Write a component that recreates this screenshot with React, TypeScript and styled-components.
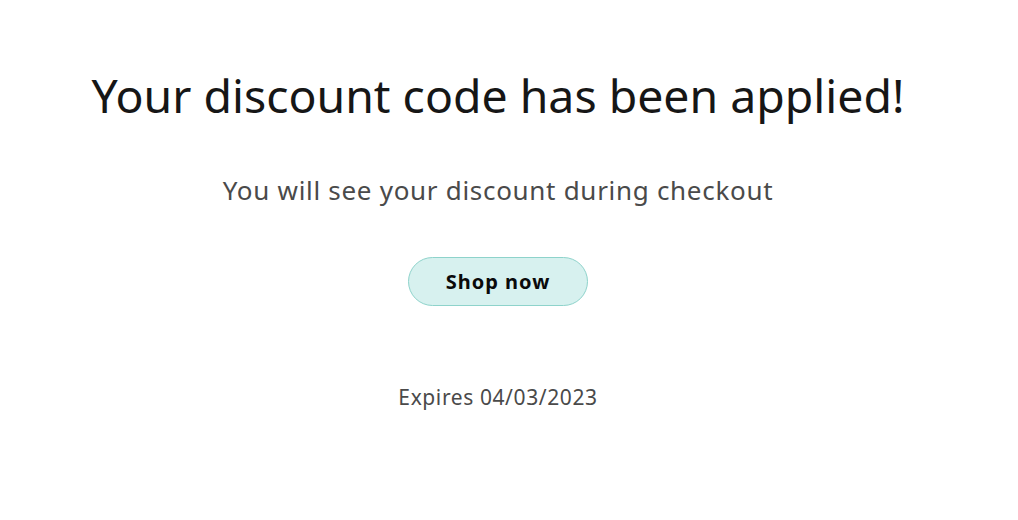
import React from "react";
import { styled, createGlobalStyle } from "styled-components";

const GlobalStyle = createGlobalStyle`
  html, body {
    margin: 0;
    padding: 0;
    background: #ffffff;
    font-family: "Noto Sans", "Open Sans", sans-serif;
  }
`;

const App = () => {
  return (
    <>
      <GlobalStyle />
      <Page>
        <Title>Your discount code has been applied!</Title>
        <Subtitle>You will see your discount during checkout</Subtitle>
        <ShopButton type="button">Shop now</ShopButton>
        <Expires>Expires 04/03/2023</Expires>
      </Page>
    </>
  );
};

const Page = styled.main`
  display: flex;
  flex-direction: column;
  align-items: center;
  width: 1018px;
  height: 520px;
  box-sizing: border-box;
  padding: 60px 22px 0 0;
`;

const Title = styled.h1`
  margin: 0;
  font-size: 46.4px;
  font-weight: 400;
  line-height: 70px;
  color: #161616;
`;

const Subtitle = styled.p`
  margin: 42px 0 0;
  font-size: 26px;
  letter-spacing: 0.7px;
  line-height: 36px;
  color: #4a4a4a;
`;

const ShopButton = styled.button`
  margin-top: 49px;
  width: 180px;
  height: 49px;
  border-radius: 25px;
  border: 1px solid #8ed3cb;
  background: #d7f1ef;
  font-family: inherit;
  font-size: 20px;
  font-weight: 700;
  letter-spacing: 1px;
  color: #0a0a0a;
  cursor: pointer;
`;

const Expires = styled.p`
  margin: 76px 0 0;
  font-size: 21px;
  letter-spacing: 0.6px;
  line-height: 30px;
  color: #4a4a4a;
`;

export default App;
